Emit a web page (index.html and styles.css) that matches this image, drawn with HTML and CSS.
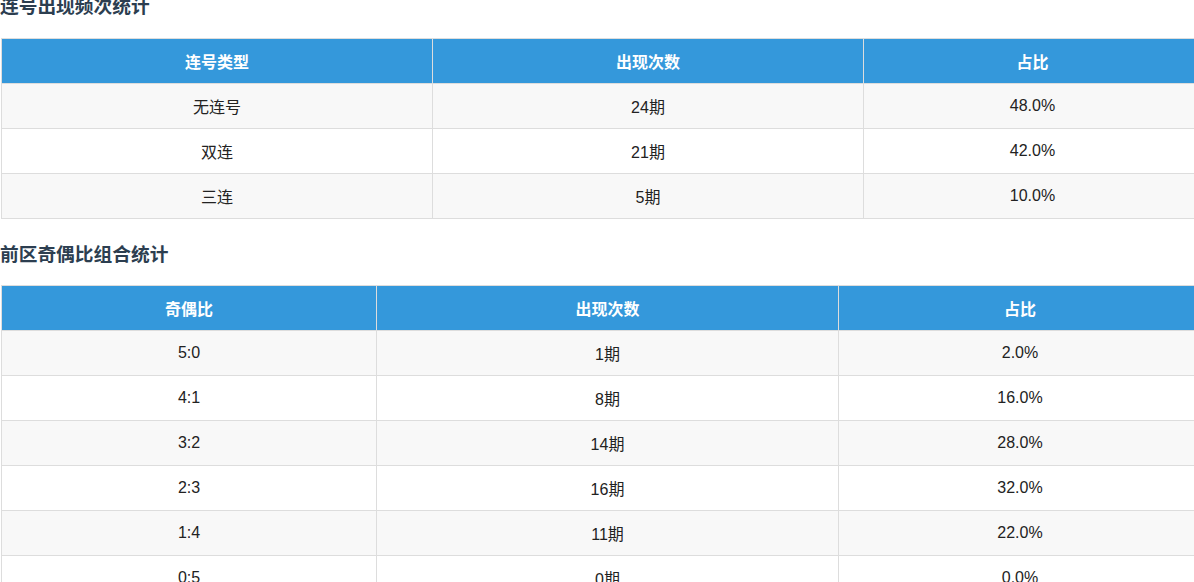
FILE: index.html
```html
<!DOCTYPE html>
<html lang="zh-CN">
<head>
<meta charset="utf-8">
<title>统计</title>
<link rel="stylesheet" href="styles.css">
</head>
<body>
<div class="page">
  <h3 class="section-title first">连号出现频次统计</h3>
  <table class="stats-table">
    <colgroup><col class="c431"><col class="c431"><col></colgroup>
    <thead>
      <tr><th>连号类型</th><th>出现次数</th><th>占比</th></tr>
    </thead>
    <tbody>
      <tr><td>无连号</td><td>24期</td><td>48.0%</td></tr>
      <tr><td>双连</td><td>21期</td><td>42.0%</td></tr>
      <tr><td>三连</td><td>5期</td><td>10.0%</td></tr>
    </tbody>
  </table>

  <h3 class="section-title">前区奇偶比组合统计</h3>
  <table class="stats-table">
    <colgroup><col class="c375"><col class="c462"><col></colgroup>
    <thead>
      <tr><th>奇偶比</th><th>出现次数</th><th>占比</th></tr>
    </thead>
    <tbody>
      <tr><td>5:0</td><td>1期</td><td>2.0%</td></tr>
      <tr><td>4:1</td><td>8期</td><td>16.0%</td></tr>
      <tr><td>3:2</td><td>14期</td><td>28.0%</td></tr>
      <tr><td>2:3</td><td>16期</td><td>32.0%</td></tr>
      <tr><td>1:4</td><td>11期</td><td>22.0%</td></tr>
      <tr><td>0:5</td><td>0期</td><td>0.0%</td></tr>
    </tbody>
  </table>
</div>
</body>
</html>
```

FILE: styles.css
```css
html, body {
  margin: 0;
  padding: 0;
  background: #ffffff;
  overflow: hidden;
}

.page {
  width: 1202px;
  padding-left: 1px;
  font-family: "Liberation Sans", Arial, "Noto Sans CJK SC", sans-serif;
  font-size: 16px;
  color: #222;
}

.section-title {
  font-size: 18.72px;
  font-weight: bold;
  color: #2c3e50;
  margin: 20px 0 19px;
  margin-left: -1px;
  line-height: normal;
}

.section-title.first {
  margin-top: -9px;
  margin-bottom: 20px;
}

.stats-table {
  width: 1201px;
  border-collapse: collapse;
  table-layout: fixed;
}

.c431 { width: 431px; }
.c375 { width: 375px; }
.c462 { width: 462px; }

.stats-table th,
.stats-table td {
  border: 1px solid #dddddd;
  padding: 10px 8px;
  text-align: center;
  line-height: normal;
  height: 24px;
}

.stats-table th {
  background: #3498db;
  color: #ffffff;
  font-weight: bold;
}

.stats-table tbody tr:nth-child(odd) td {
  background: #f8f8f8;
}

.stats-table tbody tr:nth-child(even) td {
  background: #ffffff;
}
```
